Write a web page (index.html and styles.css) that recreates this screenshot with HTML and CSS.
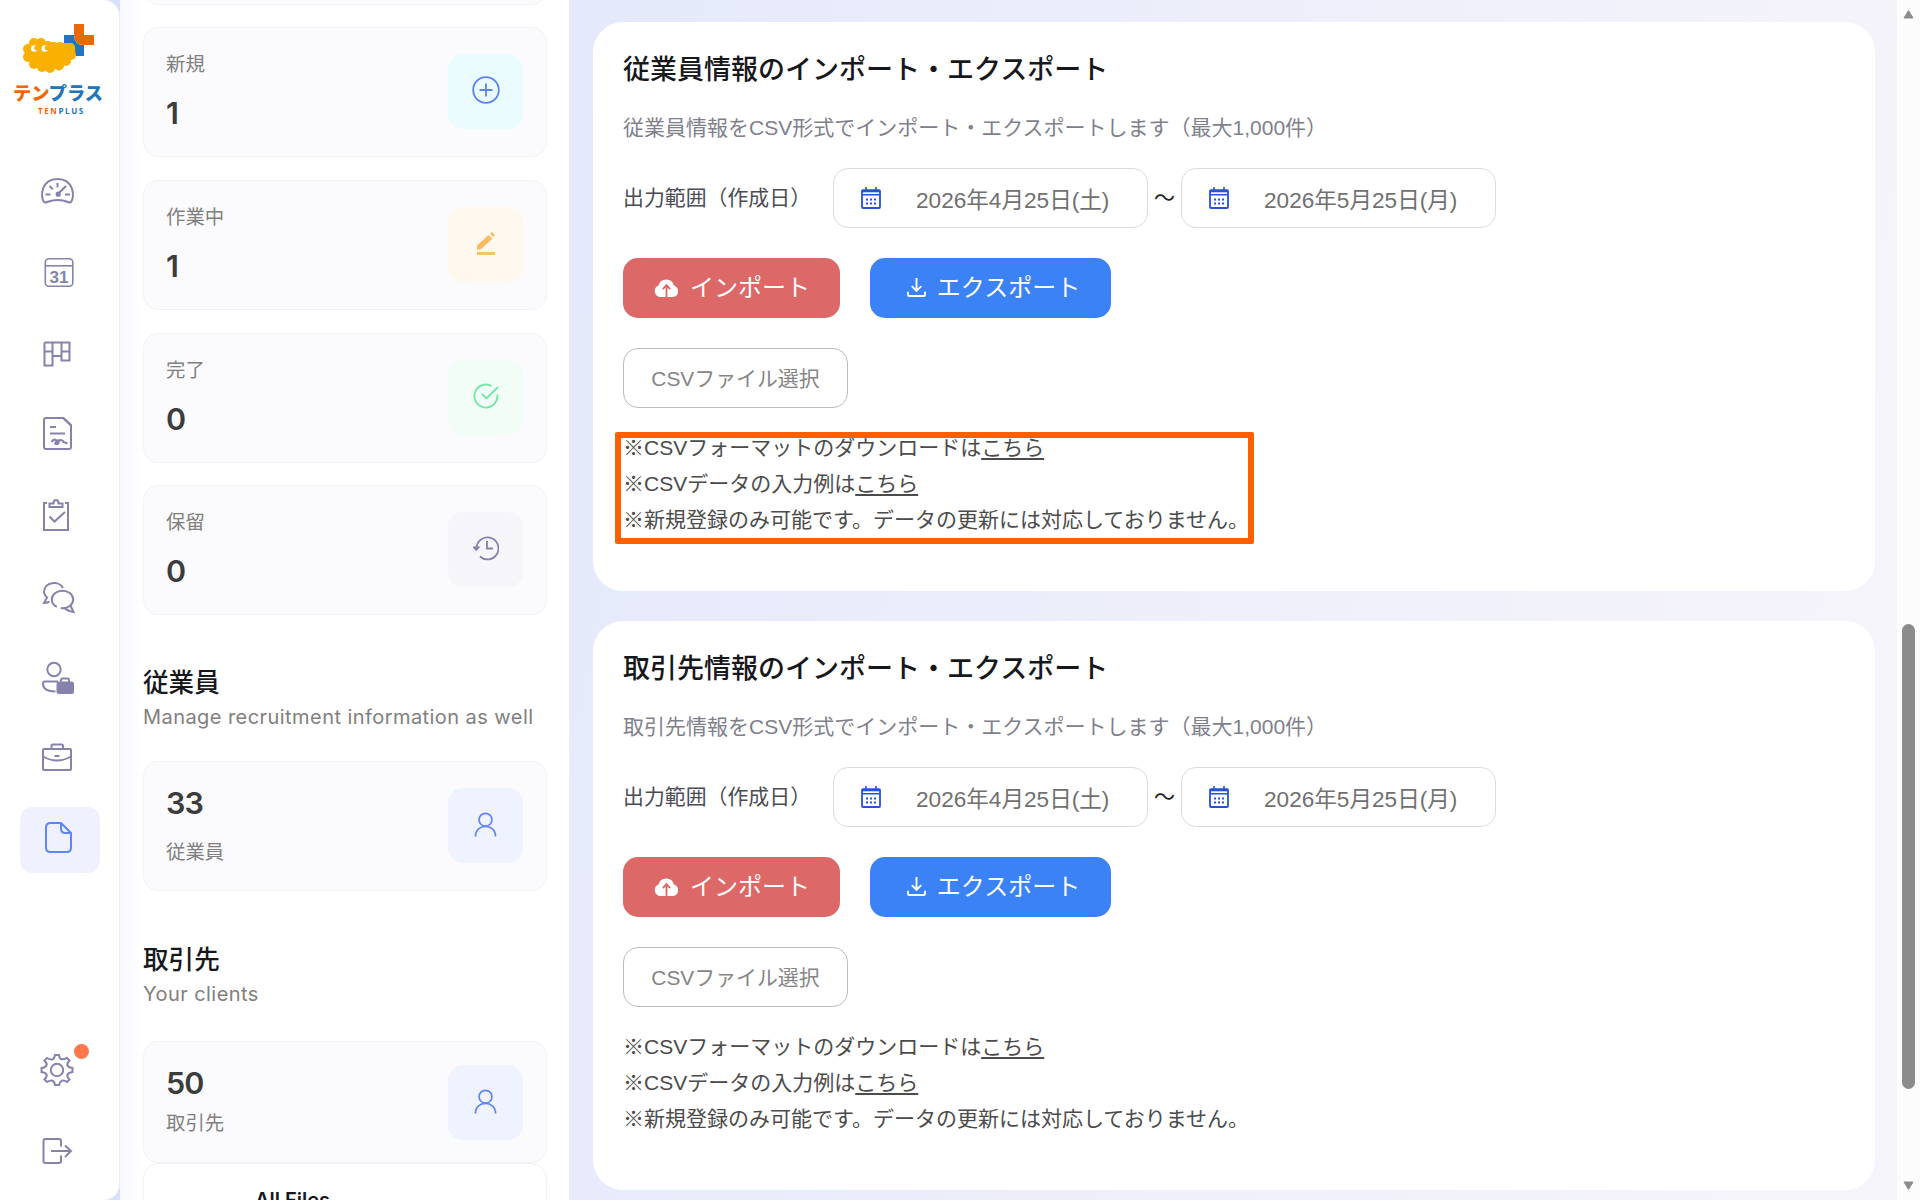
FILE: index.html
```html
<!DOCTYPE html>
<html lang="ja">
<head>
  <meta charset="UTF-8">
  <title>テンプラス</title>
  <link rel="stylesheet" href="styles.css">
</head>
<body>
  <svg class="sprite">
    <symbol id="calendar" viewBox="0 0 20 22">
      <path d="M2 3.200h16a1 1 0 0 1 1 1V20a1 1 0 0 1-1 1H2a1 1 0 0 1-1-1V4.200a1 1 0 0 1 1-1z" fill="none" stroke="currentColor" stroke-width="1.800"/>
      <path d="M1 7.800h18M5 0v3M15 0v3" stroke="currentColor" stroke-width="1.600"/>
      <path d="M1 4.300h18" stroke="currentColor" stroke-width="2"/>
      <path d="M5 12.500h10M5 16.500h10" stroke="currentColor" stroke-width="2" stroke-dasharray="2 2"/>
    </symbol>
    <symbol id="cloud" viewBox="0 0 25 20">
      <path d="M6 20a6 6 0 0 1-1.500-11.500 8 8 0 0 1 15.500 0A6 6 0 0 1 19.500 20z" fill="#fff"/>
      <path d="M12.500 20V9M8.800 12.200l3.700-4 3.700 4" fill="none" stroke="#dc6868" stroke-width="1.800"/>
    </symbol>
    <symbol id="download" viewBox="0 0 20 20">
      <path d="M10 0v13M5 8.500l5 5 5-5M1 14.500V17q0 2 2 2h14q2 0 2-2v-2.500" fill="none" stroke="#fff" stroke-width="2"/>
    </symbol>
    <symbol id="user" viewBox="0 0 24 26">
      <circle cx="12" cy="8" r="6.700"/>
      <path d="M1.500 25.500C1.500 11.500 22.500 11.500 22.500 25.500"/>
    </symbol>
  </svg>

  <div class="app">
    <aside class="sidebar">
      <div class="logo">
        <svg width="76" height="52" viewBox="0 0 76 52">
          <path d="M41 12h10q0 10 10 10v11H51V22H41z" fill="#2175bd"/>
          <path d="M51 1h10v11h10v10H61q-10 0-10-10z" fill="#ec6808"/>
          <g fill="#f9b000">
            <ellipse cx="25" cy="32" rx="21" ry="13"/>
            <path d="M22 20h26q5 0 4 10L40 42 20 46z"/>
            <circle cx="11" cy="20" r="5"/><circle cx="18" cy="20" r="5"/>
            <circle cx="5" cy="26" r="5"/><circle cx="5" cy="34" r="5"/>
            <circle cx="11" cy="41" r="5"/><circle cx="19" cy="44" r="5"/>
            <circle cx="27" cy="45" r="5"/><circle cx="36" cy="42.500" r="5"/>
            <circle cx="43" cy="38" r="5"/><circle cx="48" cy="32" r="5"/>
            <circle cx="37" cy="24" r="5"/><circle cx="47" cy="25" r="5"/>
            <circle cx="25" cy="22" r="4"/><circle cx="31" cy="23" r="4"/>
          </g>
          <circle cx="11.300" cy="25.500" r="3.300" fill="#fff"/><circle cx="13.300" cy="25" r="2.200" fill="#f9b000"/>
          <circle cx="21.800" cy="25.500" r="3.300" fill="#fff"/><circle cx="23.800" cy="25" r="2.200" fill="#f9b000"/>
        </svg>
        <div class="logo-name"><span>テン</span>プラス</div>
        <div class="logo-sub"><span>TEN</span>PLUS</div>
      </div>

      <nav class="nav">
        <a class="nav-item"><svg viewBox="0 0 40 40">
          <path d="M4 30C0 25 1 7 17.500 7S35 25 31 30q-1 1-3 0-10-4-21 0-2 1-3 0z"/>
          <path d="M17.500 11v4.500M9.500 14l3.200 3.200M5.500 22.500h5M25 22.500h5"/>
          <path d="M26 14l-9 9" stroke-width="2.200"/><circle cx="18.200" cy="22.200" r="1.600" fill="currentColor"/>
        </svg></a>
        <a class="nav-item"><svg viewBox="0 0 40 40">
          <rect x="5.300" y="5.800" width="27.500" height="27.500" rx="3.500" stroke-width="1.600"/>
          <path d="M5.500 12.800h27.500" stroke-width="1.600"/>
          <text x="19" y="30">31</text>
        </svg></a>
        <a class="nav-item"><svg viewBox="0 0 40 40">
          <path d="M4.500 8.500h25v18h-8V8.500M4.500 8.500v23h8v-23M4.500 17.500h8M21.500 17.500h8M12.500 22h9"/>
        </svg></a>
        <a class="nav-item"><svg viewBox="0 0 40 40">
          <path d="M6 3h17.500l7.500 7v22q0 2-2 2H6q-2 0-2-2V5q0-2 2-2zM23.500 3.500 30.500 10M10 12h6M10 18.500h15"/>
          <path d="M11.500 27q2-3 4-2c4 0 4 4 1 4q-3 0 1-3 5-2 6 1l4 1.500" stroke-width="2.200"/>
        </svg></a>
        <a class="nav-item"><svg viewBox="0 0 40 40">
          <path d="M7 7H4v27h24V7h-3M9.500 11V7.500h4q0-3.500 2.500-3.500t2.500 3.500h4V11zM9.500 20.500l5 5L25 16"/>
        </svg></a>
        <a class="nav-item"><svg viewBox="0 0 40 40">
          <path d="M23 11C19 3 4 5 4 15q0 3 3 5.500L4 26q4-.3 5.500-1.500"/>
          <ellipse cx="22.500" cy="22.500" rx="10.700" ry="8.700" stroke-dasharray="17 4 100"/>
          <path d="M30.500 28.500 33.500 35q-6-1-9-4"/>
        </svg></a>
        <a class="nav-item"><svg viewBox="0 0 40 40">
          <circle cx="14" cy="11.500" r="6.700"/>
          <path d="M18 23.500H5q-2 0-2 2C3 31 8 33.500 15.500 33.500M21 26v-4q0-1.500 1.500-1.500h5q1.500 0 1.500 1.500v4"/>
          <rect x="17.500" y="24.500" width="15.500" height="10.500" rx="1.500" fill="currentColor"/>
        </svg></a>
        <a class="nav-item"><svg viewBox="0 0 40 40">
          <rect x="3" y="10" width="28" height="21" rx="1"/>
          <path d="M11.500 10V7q0-1.500 1.500-1.500h8.500q1.500 0 1.500 1.500v3M3 17.500q14 8 28 0M14.500 17h5"/>
        </svg></a>
        <a class="nav-item active"><svg viewBox="0 0 40 40">
          <path d="M21 3H10.500q-4.500 0-4.500 4.500v20Q6 32 10.500 32h16q4.500 0 4.500-4.500V13zM21 3v5.500q0 4.500 4.500 4.500H31"/>
        </svg></a>
      </nav>

      <div class="nav nav-bottom">
        <a class="nav-item"><svg viewBox="0 0 40 40">
          <path d="M15 5h4q.5 4 2.500 4.300T27 8l2.500 2.500q-3 3-2 5t5 2.500v4q-4 .5-5 2.500t2 5L27 32q-3-2.200-5-1.300T19 35h-4q-.5-3.500-2.500-4.300T7 32l-2.500-2.500q3-3 2-5t-5-2.500v-4q4-.5 5-2.500t-2-5L7 8q3.500 2.200 5.500 1.300T15 5z"/>
          <circle cx="17" cy="20" r="6.200"/>
        </svg><span class="dot"></span></a>
        <a class="nav-item"><svg viewBox="0 0 40 40">
          <path d="M21 15.500V10q0-2-2-2H5.500q-2 0-2 2v20q0 2 2 2H19q2 0 2-2v-5.500M11 20h20M25 14.500l6 5.500-6 6"/>
        </svg></a>
      </div>
    </aside>

    <section class="panel">
      <div class="card"></div>
      <div class="card">
        <div class="card-text"><p>新規</p><strong>1</strong></div>
        <div class="card-icon cyan"><svg width="28" height="28" viewBox="0 0 28 28">
          <circle cx="14" cy="14" r="12.800"/><path d="M14 7.500v13M7.500 14h13"/>
        </svg></div>
      </div>
      <div class="card">
        <div class="card-text"><p>作業中</p><strong>1</strong></div>
        <div class="card-icon orange"><svg width="20" height="24" viewBox="0 0 20 24">
          <path d="M1 14.500 12.500 4l4 3.800L4.500 18.500H1zM14 2.800 16 1l3 3-1.700 2z" fill="currentColor" stroke="none"/>
          <path d="M1 22.500h18" stroke-width="2.800"/>
        </svg></div>
      </div>
      <div class="card">
        <div class="card-text"><p>完了</p><strong>0</strong></div>
        <div class="card-icon green"><svg width="26" height="26" viewBox="0 0 26 26">
          <path d="M18.500 3A11.500 11.500 0 1 0 24.300 11.500M9 11l4.500 4.500L25 4"/>
        </svg></div>
      </div>
      <div class="card">
        <div class="card-text"><p>保留</p><strong>0</strong></div>
        <div class="card-icon gray"><svg width="26" height="26" viewBox="0 0 26 26">
          <path d="M3.500 14A11 11 0 1 1 7 21.500M1 12.500h4.500L3.300 15zM14 6v7.500h6"/>
        </svg></div>
      </div>

      <h2 class="first-title">従業員</h2>
      <p class="sub">Manage recruitment information as well</p>
      <div class="card count">
        <div class="card-text"><strong>33</strong><p>従業員</p></div>
        <div class="card-icon blue"><svg width="23" height="25"><use href="#user"/></svg></div>
      </div>

      <h2>取引先</h2>
      <p class="sub clients">Your clients</p>
      <div class="card count short">
        <div class="card-text"><strong>50</strong><p>取引先</p></div>
        <div class="card-icon blue"><svg width="23" height="25"><use href="#user"/></svg></div>
      </div>
      <div class="files">All Files</div>
    </section>

    <main class="main">
      <section class="box">
        <h1>従業員情報のインポート・エクスポート</h1>
        <p class="desc">従業員情報をCSV形式でインポート・エクスポートします（最大1,000件）</p>
        <div class="range">
          <label>出力範囲（作成日）</label>
          <div class="date"><svg width="20" height="22"><use href="#calendar"/></svg>2026年4月25日(土)</div>
          <span class="tilde">～</span>
          <div class="date"><svg width="20" height="22"><use href="#calendar"/></svg>2026年5月25日(月)</div>
        </div>
        <div class="buttons">
          <button class="btn import"><svg width="25" height="20"><use href="#cloud"/></svg>インポート</button>
          <button class="btn export"><svg width="19" height="19"><use href="#download"/></svg>エクスポート</button>
        </div>
        <button class="btn file">CSVファイル選択</button>
        <div class="notes">
          <p>※CSVフォーマットのダウンロードは<a>こちら</a></p>
          <p>※CSVデータの入力例は<a>こちら</a></p>
          <p>※新規登録のみ可能です。データの更新には対応しておりません。</p>
          <div class="highlight"></div>
        </div>
      </section>

      <section class="box">
        <h1>取引先情報のインポート・エクスポート</h1>
        <p class="desc">取引先情報をCSV形式でインポート・エクスポートします（最大1,000件）</p>
        <div class="range">
          <label>出力範囲（作成日）</label>
          <div class="date"><svg width="20" height="22"><use href="#calendar"/></svg>2026年4月25日(土)</div>
          <span class="tilde">～</span>
          <div class="date"><svg width="20" height="22"><use href="#calendar"/></svg>2026年5月25日(月)</div>
        </div>
        <div class="buttons">
          <button class="btn import"><svg width="25" height="20"><use href="#cloud"/></svg>インポート</button>
          <button class="btn export"><svg width="19" height="19"><use href="#download"/></svg>エクスポート</button>
        </div>
        <button class="btn file">CSVファイル選択</button>
        <div class="notes">
          <p>※CSVフォーマットのダウンロードは<a>こちら</a></p>
          <p>※CSVデータの入力例は<a>こちら</a></p>
          <p>※新規登録のみ可能です。データの更新には対応しておりません。</p>
        </div>
      </section>
    </main>

    <div class="scrollbar">
      <svg width="13" height="10" viewBox="0 0 13 10"><path d="M6.500 1.500 11 9H2z"/></svg>
      <div class="thumb"></div>
      <svg width="13" height="10" viewBox="0 0 13 10"><path d="M6.500 8.500 11 1H2z"/></svg>
    </div>
  </div>
</body>
</html>
```
FILE: styles.css
```css
* {
  box-sizing: border-box;
}
body {
  margin: 0;
  overflow: hidden;
  font-family: "Liberation Sans", "Noto Sans CJK JP", sans-serif;
}
h1, h2, p {
  margin: 0;
  font-weight: normal;
}
.sprite {
  display: none;
}
.app {
  display: flex;
  height: 1200px;
  background: #d9e0fb;
}

/* left icon bar */
.sidebar {
  width: 120px;
  flex: none;
  display: flex;
  flex-direction: column;
  padding-bottom: 16px;
  background: #fff;
  border-right: 1px solid #eceef5;
  border-radius: 0 16px 16px 0;
}
.logo {
  height: 159px;
  padding: 23px 0 0 13px;
}
.logo svg {
  display: block;
  margin-left: 10px;
}
.logo-name {
  margin-top: 6px;
  font-size: 18.200px;
  font-weight: 900;
  line-height: 26px;
  color: #2175bd;
  white-space: nowrap;
}
.logo-sub {
  padding-left: 25px;
  font-family: "Open Sans", sans-serif;
  font-size: 8px;
  font-weight: 700;
  line-height: 8px;
  letter-spacing: 1.600px;
  color: #2175bd;
}
.logo span {
  color: #ec6808;
}
.nav {
  display: flex;
  flex-direction: column;
  gap: 15px;
  padding: 0 20px;
}
.nav-bottom {
  margin-top: auto;
}
.nav-item {
  position: relative;
  height: 66px;
  width: 80px;
  display: flex;
  align-items: center;
  justify-content: center;
  border-radius: 12px;
  color: #8583ac;
}
.nav-item svg {
  width: 40px;
  height: 40px;
  fill: none;
  stroke: currentColor;
  stroke-width: 2;
}
.nav-item text {
  fill: currentColor;
  stroke: none;
  font-size: 17px;
  font-weight: bold;
  text-anchor: middle;
}
.nav-item.active {
  background: #eff1ff;
  color: #5c85f8;
}
.dot {
  position: absolute;
  top: 7px;
  left: 54px;
  width: 15px;
  height: 15px;
  border-radius: 50%;
  background: #ff774c;
}

/* summary panel */
.panel {
  width: 450px;
  flex: none;
  overflow: hidden;
  padding: 0 22px 0 23px;
  border-right: 1px solid #e8eaf4;
  background: linear-gradient(to right, #f8f9ff, #fff 24px);
  font-family: Inter, "Noto Sans CJK JP", sans-serif;
}
.card {
  height: 130px;
  margin-bottom: 22.700px;
  padding: 0 23px 0 22px;
  display: flex;
  justify-content: space-between;
  border: 1px solid #f1f2f6;
  border-radius: 15px;
  background: #fbfbfd;
}
.card:first-child {
  margin-top: -125.500px;
}
.card-text {
  padding-top: 22px;
}
.card-text p {
  font-size: 19.400px;
  line-height: 28px;
  color: #808080;
}
.card-text strong {
  display: block;
  margin-top: 17px;
  font-size: 30.500px;
  font-weight: 600;
  line-height: 36px;
  letter-spacing: -1px;
  color: #3c3c3c;
}
.card-icon {
  width: 75px;
  height: 75px;
  margin-top: 26px;
  display: flex;
  align-items: center;
  justify-content: center;
  padding-bottom: 3px;
  border-radius: 15px;
}
.card-icon svg {
  fill: none;
  stroke: currentColor;
  stroke-width: 1.800;
}
.cyan {
  background: #ebfcff;
  color: #5c7ff2;
}
.orange {
  background: #fff8ee;
  color: #f5be63;
}
.green {
  background: #f1fdf6;
  color: #75e6a6;
}
.gray {
  background: #f5f5fa;
  color: #8583ac;
}
.blue {
  background: #eff2ff;
  color: #6286f5;
}
.panel h2 {
  margin-top: 51px;
  font-size: 25.600px;
  font-weight: 500;
  line-height: 36px;
  color: #17181c;
}
.panel h2.first-title {
  margin-top: 50px;
}
.sub {
  height: 60px;
  padding-top: 1px;
  font-size: 20px;
  line-height: 30px;
  letter-spacing: 0.440px;
  color: #808080;
  white-space: nowrap;
}
.sub.clients {
  height: 63px;
}
.card-text strong:first-child {
  margin-top: 1px;
}
.count p {
  margin-top: 17px;
}
.short {
  height: 122px;
  margin-bottom: 0;
}
.short .card-icon {
  margin-top: 23px;
}
.short p {
  margin-top: 8px;
}
.files {
  height: 100px;
  padding: 21px 0 0 111px;
  border: 1px solid #f1f2f6;
  border-radius: 15px;
  background: #fff;
  font-size: 20px;
  font-weight: 600;
  line-height: 30px;
  color: #17181c;
}

/* import / export */
.main {
  flex: 1;
  overflow: hidden;
  padding: 22px 22px 0 23px;
  background: linear-gradient(100deg, #e4e9fb, #eeeffa 50%, #f5f4fb 90%);
}
.box {
  height: 569px;
  margin-bottom: 30px;
  padding: 31px 30px 30px;
  border-radius: 30px;
  background: #fff;
}
.box h1 {
  font-size: 27px;
  font-weight: 500;
  line-height: 34px;
  color: #17181c;
}
.desc {
  margin-top: 26px;
  font-size: 21px;
  line-height: 30px;
  color: #807f8c;
}
.range {
  display: flex;
  margin-top: 25px;
}
.range label {
  width: 210px;
  font-size: 20.900px;
  line-height: 60px;
  color: #4b4b55;
}
.date {
  width: 315px;
  height: 60px;
  padding: 0 27px;
  display: flex;
  align-items: center;
  gap: 35px;
  border: 1px solid #dcdcdc;
  border-radius: 15px;
  font-size: 22.600px;
  color: #707070;
}
.date svg {
  color: #2453d9;
  margin-bottom: 1px;
}
.tilde {
  width: 33px;
  text-align: center;
  font-size: 21px;
  line-height: 60px;
  color: #222;
}
.buttons {
  display: flex;
  gap: 30px;
  margin: 30px 0;
}
.btn {
  height: 60px;
  display: flex;
  align-items: center;
  justify-content: center;
  gap: 11px;
  padding: 0;
  border: none;
  border-radius: 15px;
  color: #fff;
  font-family: inherit;
  font-size: 24px;
}
.import,
.export {
  padding-bottom: 6px;
}
.btn svg {
  margin-top: 4px;
}
.import {
  width: 217px;
  padding-left: 1px;
  background: #dc6868;
}
.export {
  width: 241px;
  padding-left: 6px;
  background: #3b82f6;
}
.file {
  width: 225px;
  border: 1px solid #bcbcbc;
  background: #fff;
  color: #858585;
  font-size: 20.900px;
  padding-bottom: 2px;
}
.notes {
  position: relative;
  margin-top: 22px;
  font-size: 21px;
  line-height: 36px;
  color: #4b4b4b;
}
.notes a {
  text-decoration: underline;
  text-decoration-thickness: 2px;
  text-underline-offset: 3px;
}
.highlight {
  position: absolute;
  top: 2px;
  left: -8px;
  width: 639px;
  height: 112px;
  border: 6px solid #ff5f00;
  border-radius: 2px;
}

.scrollbar {
  width: 23px;
  flex: none;
  display: flex;
  flex-direction: column;
  align-items: center;
  padding: 9px 0;
  background: #fcfcfc;
}
.scrollbar svg {
  fill: #8b8b8b;
  stroke: #8b8b8b;
  stroke-linejoin: round;
}
.thumb {
  width: 13px;
  height: 465px;
  margin: 605px 0 auto;
  border-radius: 7px;
  background: #8b8b8b;
}
```
